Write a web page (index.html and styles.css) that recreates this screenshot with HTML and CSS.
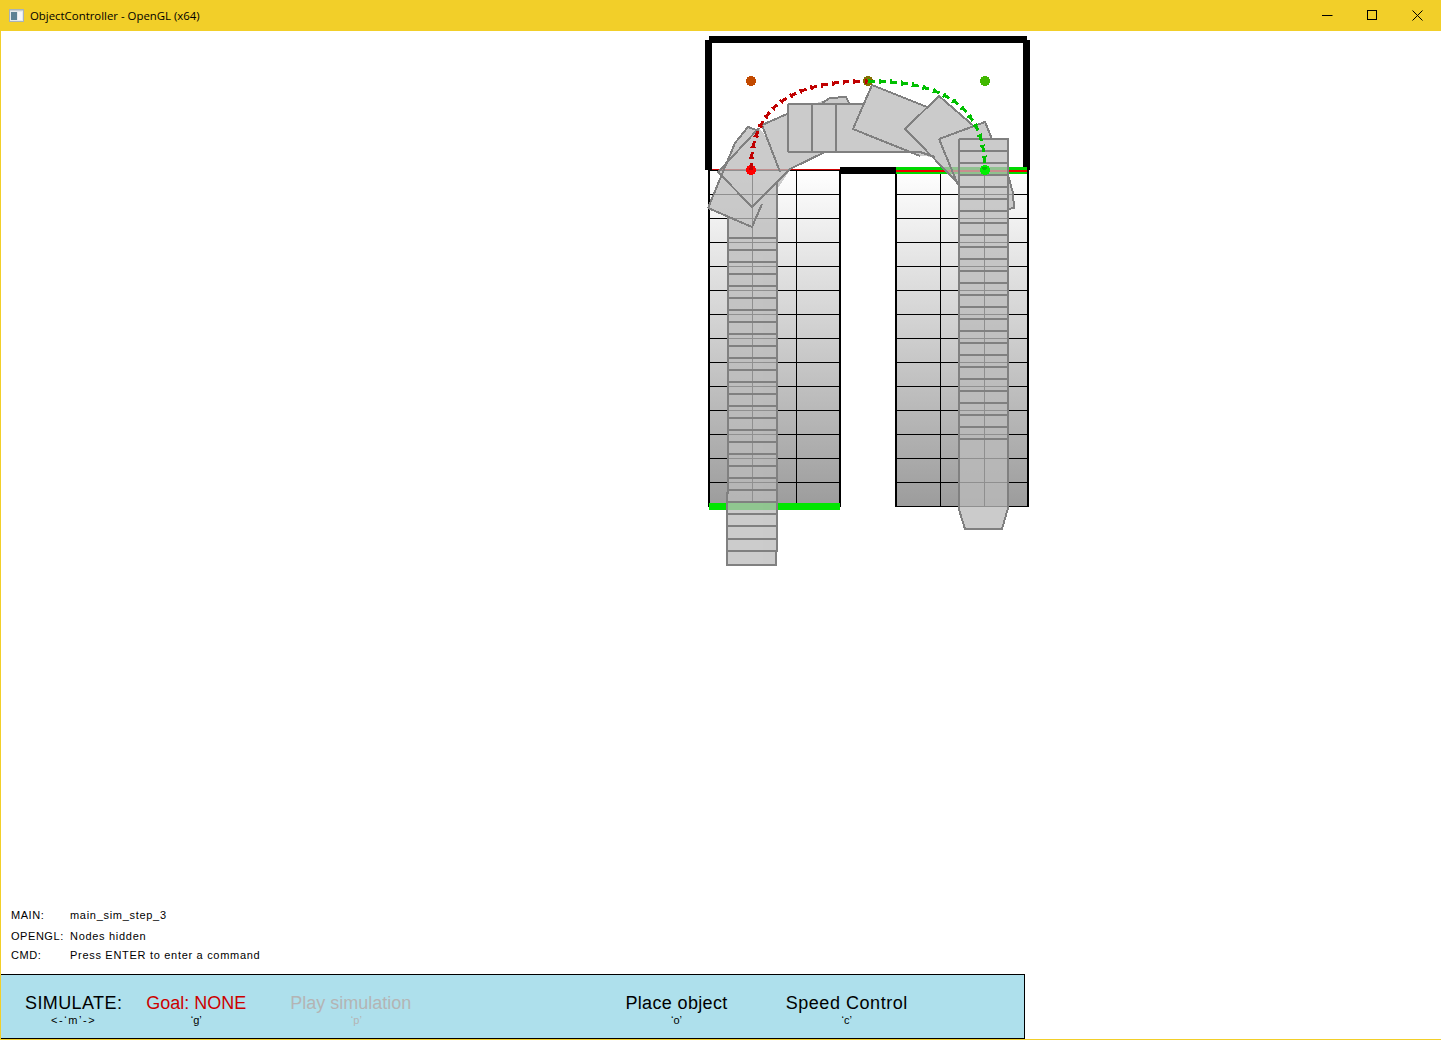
FILE: index.html
```html
<!DOCTYPE html>
<html lang="en">
<head>
<meta charset="utf-8">
<title>ObjectController - OpenGL (x64)</title>
<link rel="stylesheet" href="styles.css">
</head>
<body>
<div class="window">
  <header class="titlebar">
    <svg class="app-icon" viewBox="0 0 15 13" width="15" height="13">
      <rect x="0.5" y="0.5" width="14" height="12" fill="#e4eaec" stroke="#a9b3b8"/>
      <rect x="2" y="3" width="6" height="8" fill="#5b8294"/>
      <rect x="9" y="3" width="4" height="8" fill="#f6f8f8"/>
      <rect x="1" y="1" width="13" height="1" fill="#c4ced2"/>
    </svg>
    <span class="title">ObjectController - OpenGL (x64)</span>
    <div class="controls">
      <svg class="ctl" viewBox="0 0 11 11" width="11" height="11"><path d="M0 5.500H10.500" stroke="#000" fill="none"/></svg>
      <svg class="ctl" viewBox="0 0 11 11" width="11" height="11"><rect x="0.500" y="0.500" width="9" height="9" stroke="#000" fill="none"/></svg>
      <svg class="ctl" viewBox="0 0 11 11" width="11" height="11"><path d="M0.500 0.500L10.500 10.500M10.500 0.500L0.500 10.500" stroke="#000" fill="none"/></svg>
    </div>
  </header>

  <main class="scene">
    <svg class="scene-svg" viewBox="1 31 1440 873" width="1440" height="873">
      <defs>
        <linearGradient id="floor" gradientUnits="userSpaceOnUse" x1="0" y1="170" x2="0" y2="507">
          <stop offset="0" stop-color="#ffffff"/>
          <stop offset="1" stop-color="#9c9c9c"/>
        </linearGradient>
      </defs>

      <!-- floor grids -->
      <rect x="709" y="170" width="131" height="337" fill="url(#floor)"/>
      <rect x="896" y="170" width="132" height="337" fill="url(#floor)"/>
      <path class="grid" d="M709 170.500H840M709 194.500H840M709 218.500H840M709 242.500H840M709 266.500H840M709 290.500H840M709 314.500H840M709 338.500H840M709 362.500H840M709 386.500H840M709 410.500H840M709 434.500H840M709 458.500H840M709 482.500H840M709 506.500H840M752.500 170V507M796.500 170V507"/>
      <path class="grid" d="M896 170.500H1028M896 194.500H1028M896 218.500H1028M896 242.500H1028M896 266.500H1028M896 290.500H1028M896 314.500H1028M896 338.500H1028M896 362.500H1028M896 386.500H1028M896 410.500H1028M896 434.500H1028M896 458.500H1028M896 482.500H1028M896 506.500H1028M940.500 170V507M984.500 170V507"/>
      <path class="grid-edge" d="M709 170V507M840 170V507M896 170V507M1028 170V507"/>

      <!-- walls and target strips -->
      <path class="wall" d="M708.500 39.500V170M709 39.500H1027M1026.500 39.500V170M840 170.500H896"/>
      <rect x="709" y="503" width="131" height="7" fill="#00e600"/>
      <rect x="896" y="167" width="131" height="7" fill="#00d800"/>
      <path class="red-thin" d="M712 169.500H840"/>
      <path class="red-line" d="M896 170.500H1027"/>

      <!-- swept object: fill (group opacity keeps overlaps one flat tone) -->
      <g class="sweep-fill">
        <polygon points="708,208 735,143 748,127 759,131 790,170 752,227"/>
        <polygon points="718,172 759,128 792,168 752,207"/>
        <polygon points="762,125 787,114 825,100 825,152 792,168 780,172"/>
        <polygon points="822,103 830,98 846,97 849,103"/>
        <polygon points="788,104 864,104 920,152 788,152"/>
        <polygon points="872,85 927,107 935,157 920,156 853,129"/>
        <polygon points="939,96 976,128 958,185 905,129"/>
        <polygon points="939,139 985,122 992,139 1008,139 1008,175 958,185"/>
        <polygon points="1008,175 1013,193 1014,208 1008,209"/>
        <polygon points="959,139 1008,139 1008,508 1002,529 965,529 959,508"/>
        <polygon points="728,183 777,183 777,551 776,551 776,565 727,565 727,493 728,493"/>
      </g>

      <!-- swept object: outlines -->
      <path class="outline" d="M708 208L735 143L748 127L759 131M708 208L752 227L762 204"/>
      <path class="outline" d="M718 172L752 207L790 169L825 152M718 172L759 128"/>
      <path class="outline" d="M762 125L780 172M762 125L787 114"/>
      <path class="outline" d="M822 103L830 98L846 97L849 103"/>
      <path class="outline" d="M788 104H864M788 152H920L935 157M788 104V152M812 104V152M836 104V152"/>
      <path class="outline" d="M872 85L853 129L920 156M872 85L927 107"/>
      <path class="outline" d="M939 96L905 129L958 183M939 96L976 128"/>
      <path class="outline" d="M939 139L985 122L992 139M939 139L958 185"/>
      <path class="outline" d="M1008 175L1013 193L1014 208L1008 209"/>
      <path class="outline" d="M959 139H1008V508L1002 529H965L958.500 508V139"/>
      <path class="outline" d="M959 151H1008M959 163H1008M959 175H1008M959 187H1008M959 199H1008M959 211H1008M959 223H1008M959 235H1008M959 247H1008M959 259H1008M959 271H1008M959 283H1008M959 295H1008M959 307H1008M959 319H1008M959 331H1008M959 343H1008M959 355H1008M959 367H1008M959 379H1008M959 391H1008M959 403H1008M959 415H1008M959 427H1008M959 439H1008"/>
      <path class="outline" d="M728 218V493H727V565H776V551H777V183"/>
      <path class="outline" d="M728 238H777M728 250H777M728 262H777M728 274H777M728 286H777M728 298H777M728 310H777M728 322H777M728 334H777M728 346H777M728 358H777M728 370H777M728 382H777M728 394H777M728 406H777M728 418H777M728 430H777M728 442H777M728 454H777M728 466H777M728 478H777M728 490H777M727 502H777M727 514H777M727 526H777M727 539H777M727 551H776"/>

      <!-- trajectories -->
      <circle cx="751" cy="81" r="5" fill="#c24a00"/>
      <circle cx="868" cy="81" r="5" fill="#807000"/>
      <circle cx="985" cy="81" r="5" fill="#40b800"/>
      <circle cx="751" cy="170" r="5" fill="#ff0000"/>
      <circle cx="985" cy="170" r="5" fill="#00f000"/>
      <path class="traj red" d="M751 170C751 105 795 81 868 81"/>
      <path class="traj green" d="M868 81C941 81 985 105 985 170"/>
      <path class="traj-head red" d="M751 170C751 105 795 81 868 81"/>
      <path class="traj-head green" d="M868 81C941 81 985 105 985 170"/>
    </svg>
  </main>

  <section class="status">
    <div class="status-row row-main"><span class="status-key">MAIN:</span><span>main_sim_step_3</span></div>
    <div class="status-row row-opengl"><span class="status-key">OPENGL:</span><span>Nodes hidden</span></div>
    <div class="status-row row-cmd"><span class="status-key">CMD:</span><span>Press ENTER to enter a command</span></div>
  </section>

  <footer class="panel">
    <div class="item item-sim"><span class="label label-sim">SIMULATE:</span><span class="key key-wide">&lt;-‘m’-&gt;</span></div>
    <div class="item item-goal"><span class="label goal">Goal: NONE</span><span class="key">‘g’</span></div>
    <div class="item item-play"><span class="label muted">Play simulation</span><span class="key muted key-shift">‘p’</span></div>
    <div class="item item-place"><span class="label label-place">Place object</span><span class="key">‘o’</span></div>
    <div class="item item-speed"><span class="label label-speed">Speed Control</span><span class="key">‘c’</span></div>
  </footer>
</div>
</body>
</html>
```
FILE: styles.css
```css
* { box-sizing: border-box; }
html, body { margin: 0; padding: 0; }
body { background: #fff; overflow: hidden; }

.window {
  width: 1441px;
  height: 1040px;
  display: flex;
  flex-direction: column;
  border-left: 1px solid #f2cf29;
  border-bottom: 1px solid #f2cf29;
  font-family: "Liberation Sans", Arial, sans-serif;
  color: #000;
  background: #fff;
}

.titlebar {
  flex: 0 0 31px;
  margin-left: -1px;
  display: flex;
  align-items: center;
  background: #f2cf29;
  padding-left: 9px;
}
.app-icon { flex: none; margin-right: 6px; }
.title {
  font-family: "Open Sans", "Noto Sans", sans-serif;
  font-size: 11.4px;
  line-height: 31px;
}
.controls {
  margin-left: auto;
  display: flex;
  gap: 34px;
  padding-right: 18px;
  align-items: center;
}
.ctl { display: block; }

.scene { flex: 0 0 873px; }
.scene-svg { display: block; shape-rendering: crispEdges; }

.grid { stroke: #000; stroke-width: 1; fill: none; }
.grid-edge { stroke: #000; stroke-width: 2; fill: none; }
.wall { stroke: #000; stroke-width: 7; fill: none; }
.red-line { stroke: #f00000; stroke-width: 2; fill: none; }
.red-thin { stroke: #d00000; stroke-width: 1; fill: none; }
.sweep-fill { fill: #bcbcbc; opacity: 0.765; }
.outline { stroke: #808080; stroke-width: 2; fill: none; }
.traj { fill: none; stroke-width: 3; stroke-dasharray: 7 4; }
.traj-head { fill: none; stroke-width: 5; stroke-dasharray: 2 9; }
.traj.red, .traj-head.red { stroke: #c00000; }
.traj.green, .traj-head.green { stroke: #00c000; }

.status {
  flex: 0 0 70px;
  padding-left: 10px;
  font-size: 11px;
  letter-spacing: 0.7px;
  line-height: 13px;
}
.status-row { display: flex; }
.status-key { flex: 0 0 59px; letter-spacing: 0.55px; }
.row-main { margin-top: 5px; }
.row-opengl { margin-top: 8px; }
.row-cmd { margin-top: 6px; }

.panel {
  flex: 1;
  width: 1024px;
  display: flex;
  align-items: flex-start;
  background: #aee0ec;
  border: 1px solid #000;
  border-left: 0;
  padding: 18px 0 0 24px;
}
.item { display: flex; flex-direction: column; align-items: center; }
.label { font-size: 18px; line-height: 21px; white-space: nowrap; }
.label-sim { letter-spacing: 0.4px; }
.label-place { letter-spacing: 0.35px; }
.label-speed { letter-spacing: 0.55px; }
.key { font-size: 11px; line-height: 12px; margin-top: 0; white-space: nowrap; }
.key-wide { letter-spacing: 1.6px; }
.goal { color: #cc0000; }
.muted { color: #b4b4b4; }
.key-shift { padding-left: 11px; }
.item-goal { margin-left: 24px; }
.item-play { margin-left: 44px; }
.item-place { margin-left: 214px; }
.item-speed { margin-left: 58px; }
```
